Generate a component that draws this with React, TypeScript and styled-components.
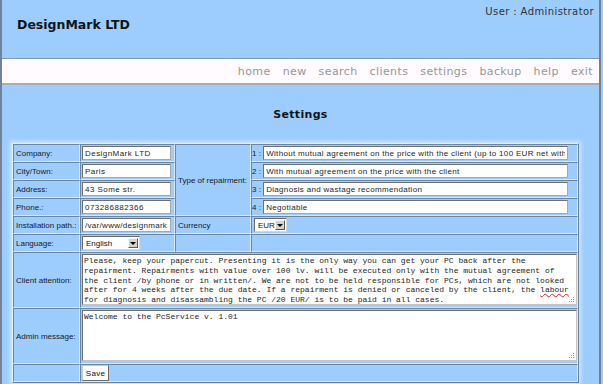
import React from 'react';
import styled, { createGlobalStyle } from 'styled-components';

const GlobalStyle = createGlobalStyle`
	html, body {
		margin: 0;
		padding: 0;
		background: #9ccdfe;
	}
	body {
		font-family: "Liberation Sans", Arial, sans-serif;
		color: #1e1e1e;
	}
`;

const Page = styled.div`
	width: 597px;
	height: 384px;
	overflow: hidden;
	background: #9ccdfe;
	border-left: 2px solid #6f8498;
	border-right: 2px solid #76808a;
`;

const Header = styled.header`
	height: 58px;
	display: flex;
	justify-content: space-between;
	align-items: flex-start;
	padding: 0 5px 0 15px;
	box-sizing: border-box;
`;

const Brand = styled.div`
	padding-top: 17px;
	font-family: "DejaVu Sans", Verdana, sans-serif;
	font-weight: bold;
	font-size: 12.5px;
	line-height: 15px;
	color: #141414;
`;

const UserInfo = styled.div`
	padding-top: 6px;
	font-family: "DejaVu Sans", Verdana, sans-serif;
	font-size: 10px;
	line-height: 12px;
	letter-spacing: 0.4px;
	color: #333;
`;

const NavBar = styled.nav`
	height: 24px;
	display: flex;
	justify-content: flex-end;
	align-items: center;
	gap: 12px;
	padding-right: 6px;
	background: #fffbff;
	border-top: 1px solid #8698aa;
	border-bottom: 2px solid #a4acb4;
`;

const NavLink = styled.a`
	font-family: "DejaVu Sans", Verdana, sans-serif;
	font-size: 11px;
	letter-spacing: 0.4px;
	color: #979797;
	text-decoration: none;
`;

const Main = styled.main`
	padding-top: 23px;
`;

const Title = styled.h1`
	margin: 0 0 22px;
	text-align: center;
	font-family: "DejaVu Sans", Verdana, sans-serif;
	font-size: 11px;
	line-height: 13px;
	letter-spacing: 0.3px;
	font-weight: bold;
	color: #141414;
`;

const Sheet = styled.div`
	display: grid;
	grid-template-columns: 67px 95px 76px 327px;
	grid-template-rows: repeat(6, 18px) 56px 56px 18px;
	width: max-content;
	margin-left: 10px;
	border: 1px solid;
	border-color: #e2f1ff #6a8399 #6a8399 #e2f1ff;
	box-shadow: 0 0 4px 2px rgba(214, 236, 255, 0.85);
`;

const Cell = styled.div<{ $rows?: number; $cols?: number; $top?: boolean; $pad?: number }>`
	grid-row: ${p => (p.$rows ? `span ${p.$rows}` : 'auto')};
	grid-column: ${p => (p.$cols ? `span ${p.$cols}` : 'auto')};
	display: flex;
	align-items: ${p => (p.$top ? 'flex-start' : 'center')};
	padding: ${p => (p.$top ? '1px' : '0')} 0 0 ${p => p.$pad ?? 1}px;
	border: 1px solid;
	border-color: #6d879e #d6ebff #d6ebff #6d879e;
	font-size: 8px;
	white-space: nowrap;
	overflow: hidden;
	min-width: 0;
`;

const Label = styled.span`
	font-size: 8px;
	color: #1a1a1a;
`;

const Field = styled.input<{ $w: number; $spacing: number }>`
	width: ${p => p.$w}px;
	height: 14px;
	box-sizing: border-box;
	margin: 0;
	padding: 0 2px;
	border: 1px solid;
	border-color: #707070 #a8a8a8 #a8a8a8 #707070;
	background: #fff;
	font-family: "Liberation Sans", Arial, sans-serif;
	font-size: 8px;
	letter-spacing: ${p => p.$spacing}px;
	color: #1e1e1e;
	outline: none;
`;

const SelectBox = styled.div<{ $w: number }>`
	display: inline-flex;
	align-items: center;
	justify-content: space-between;
	width: ${p => p.$w}px;
	height: 14px;
	box-sizing: border-box;
	padding: 1px 1px 1px 3px;
	background: #fff;
	border: 1px solid;
	border-color: #6c6c6c #d8d8d8 #d8d8d8 #6c6c6c;
	font-size: 8px;
	color: #111;
`;

const SelectArrow = styled.span`
	width: 10px;
	height: 10px;
	box-sizing: border-box;
	display: flex;
	align-items: center;
	justify-content: center;
	background: #d6d3ce;
	border: 1px solid;
	border-color: #f4f4f4 #5a5a5a #5a5a5a #f4f4f4;

	&::after {
		content: '';
		border-left: 3px solid transparent;
		border-right: 3px solid transparent;
		border-top: 3px solid #000;
	}
`;

const TextBox = styled.div<{ $w: number; $h: number }>`
	position: relative;
	width: ${p => p.$w}px;
	height: ${p => p.$h}px;
	box-sizing: border-box;
	padding: 1px 1px;
	background: #fff;
	border: 1px solid;
	border-color: #6e6e6e #c4c4c4 #c4c4c4 #6e6e6e;
	font-family: "Liberation Mono", "Courier New", monospace;
	font-size: 8px;
	line-height: 9.8px;
	white-space: pre;
	color: #1e1e1e;
	overflow: hidden;
`;

const Misspelled = styled.span`
	text-decoration: underline wavy #e0202a;
	text-decoration-thickness: 1px;
	text-underline-offset: 1px;
`;

const Grip = styled.svg`
	position: absolute;
	right: 1px;
	bottom: 1px;
`;

const SaveButton = styled.button`
	width: 27px;
	height: 16px;
	margin: 0;
	padding: 0;
	background: #fbfbfb;
	border: 1px solid;
	border-color: #c8c8c8 #6c6c6c #6c6c6c #c8c8c8;
	font-family: "Liberation Sans", Arial, sans-serif;
	font-size: 8px;
	letter-spacing: 0.3px;
	color: #111;
`;

const navItems = ['home', 'new', 'search', 'clients', 'settings', 'backup', 'help', 'exit'];

const repairTypes = [
	'Without mutual agreement on the price with the client (up to 100 EUR net with',
	'With mutual agreement on the price with the client',
	'Diagnosis and wastage recommendation',
	'Negotiable',
];

const personal = [
	{ label: 'Company:', value: 'DesignMark LTD' },
	{ label: 'City/Town:', value: 'Paris' },
	{ label: 'Address:', value: '43 Some str.' },
	{ label: 'Phone.:', value: '073286882366' },
];

function ResizeGrip() {
	const dots = [
		[6, 0],
		[4, 2],
		[6, 2],
		[2, 4],
		[4, 4],
		[6, 4],
	];
	return (
		<Grip width="8" height="6" viewBox="0 0 8 6">
			{dots.map(([x, y]) => (
				<rect key={`${x}-${y}`} x={x} y={y} width="1" height="1" fill="#9a9a9a" />
			))}
		</Grip>
	);
}

export default function App() {
	return (
		<>
			<GlobalStyle />
			<Page>
				<Header>
					<Brand>DesignMark LTD</Brand>
					<UserInfo>User : Administrator</UserInfo>
				</Header>
				<NavBar>
					{navItems.map(item => (
						<NavLink key={item} href="#">
							{item}
						</NavLink>
					))}
				</NavBar>
				<Main>
					<Title>Settings</Title>
					<Sheet>
						{personal.map((row, i) => (
							<React.Fragment key={row.label}>
								<Cell $pad={2}>
									<Label>{row.label}</Label>
								</Cell>
								<Cell>
									<Field $w={89} $spacing={0.45} readOnly defaultValue={row.value} />
								</Cell>
								{i === 0 && (
									<Cell $rows={4} $pad={2}>
										<Label>Type of repairment:</Label>
									</Cell>
								)}
								<Cell $pad={0}>
									<Label>{i + 1} :&nbsp;</Label>
									<Field $w={305} $spacing={0.32} readOnly defaultValue={repairTypes[i]} />
								</Cell>
							</React.Fragment>
						))}

						<Cell $pad={2}>
							<Label>Installation path.:</Label>
						</Cell>
						<Cell>
							<Field $w={89} $spacing={0.3} readOnly defaultValue="/var/www/designmark.eu/pcservice/" />
						</Cell>
						<Cell $pad={2}>
							<Label>Currency</Label>
						</Cell>
						<Cell $pad={2}>
							<SelectBox $w={33}>
								EUR
								<SelectArrow />
							</SelectBox>
						</Cell>

						<Cell $pad={2}>
							<Label>Language:</Label>
						</Cell>
						<Cell>
							<SelectBox $w={58}>
								English
								<SelectArrow />
							</SelectBox>
						</Cell>
						<Cell />
						<Cell />

						<Cell $pad={2}>
							<Label>Client attention:</Label>
						</Cell>
						<Cell $cols={3} $top>
							<TextBox $w={495} $h={51}>
								{'Please, keep your papercut. Presenting it is the only way you can get your PC back after the\n' +
									'repairment. Repairments with value over 100 lv. will be executed only with the mutual agreement of\n' +
									'the client /by phone or in written/. We are not to be held responsible for PCs, which are not looked\n' +
									'after for 4 weeks after the due date. If a repairment is denied or canceled by the client, the '}
								<Misspelled>labour</Misspelled>
								{'\nfor diagnosis and disassambling the PC /20 EUR/ is to be paid in all cases.'}
								<ResizeGrip />
							</TextBox>
						</Cell>

						<Cell $pad={2}>
							<Label>Admin message:</Label>
						</Cell>
						<Cell $cols={3} $top>
							<TextBox $w={495} $h={51}>
								Welcome to the PcService v. 1.01
								<ResizeGrip />
							</TextBox>
						</Cell>

						<Cell />
						<Cell $cols={3}>
							<SaveButton type="button">Save</SaveButton>
						</Cell>
					</Sheet>
				</Main>
			</Page>
		</>
	);
}
